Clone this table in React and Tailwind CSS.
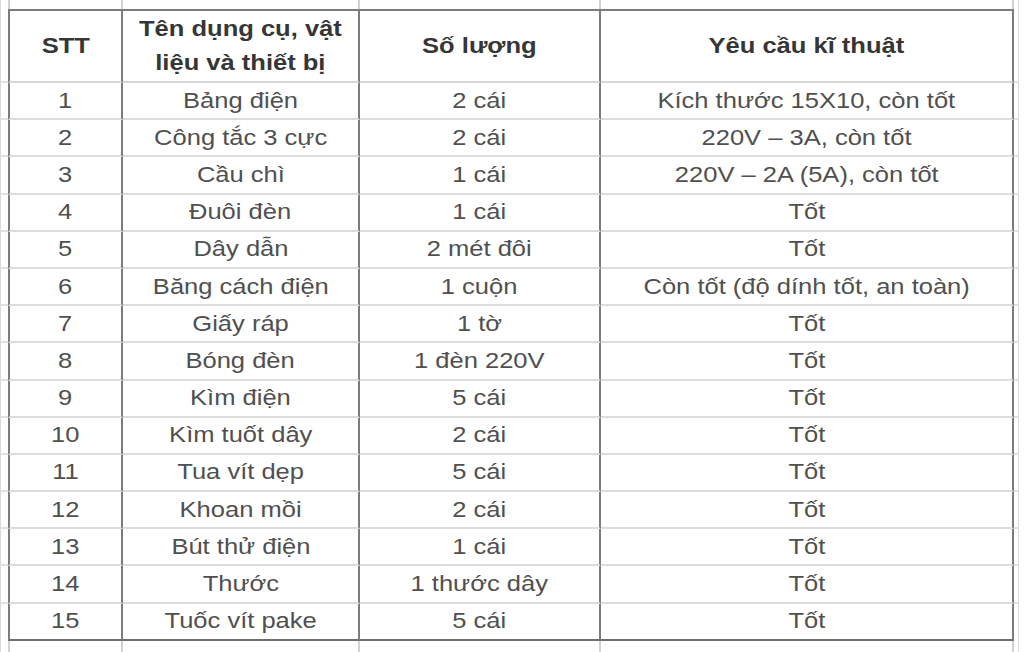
import React from "react";

const rows = [
  ["1", "Bảng điện", "2 cái", "Kích thước 15X10, còn tốt"],
  ["2", "Công tắc 3 cực", "2 cái", "220V – 3A, còn tốt"],
  ["3", "Cầu chì", "1 cái", "220V – 2A (5A), còn tốt"],
  ["4", "Đuôi đèn", "1 cái", "Tốt"],
  ["5", "Dây dẫn", "2 mét đôi", "Tốt"],
  ["6", "Băng cách điện", "1 cuộn", "Còn tốt (độ dính tốt, an toàn)"],
  ["7", "Giấy ráp", "1 tờ", "Tốt"],
  ["8", "Bóng đèn", "1 đèn 220V", "Tốt"],
  ["9", "Kìm điện", "5 cái", "Tốt"],
  ["10", "Kìm tuốt dây", "2 cái", "Tốt"],
  ["11", "Tua vít dẹp", "5 cái", "Tốt"],
  ["12", "Khoan mồi", "2 cái", "Tốt"],
  ["13", "Bút thử điện", "1 cái", "Tốt"],
  ["14", "Thước", "1 thước dây", "Tốt"],
  ["15", "Tuốc vít pake", "5 cái", "Tốt"],
];

function Txt({ children, bold }) {
  return (
    <span
      className={
        "inline-block scale-x-[1.16] whitespace-nowrap " +
        (bold ? "font-bold text-[#363636]" : "text-[#505050]")
      }
    >
      {children}
    </span>
  );
}

function Strip({ className }) {
  return (
    <div className={"flex " + className}>
      <div className="w-[8px] border-l border-[#dadada]" />
      <div className="w-[115px] border-x-2 border-[#d2d2d2]" />
      <div className="w-[237px] border-r-2 border-[#d2d2d2]" />
      <div className="w-[241px] border-r-2 border-[#d2d2d2]" />
      <div className="w-[413px] border-r-2 border-[#d2d2d2]" />
      <div className="w-[5px] border-r border-[#dadada]" />
    </div>
  );
}

function BodyRow({ r, last }) {
  const hb = last ? "border-b-2 border-b-[#6e6e6e]" : "border-b-2 border-b-[#dcdcdc]";
  const cell = "flex items-center justify-center " + hb;
  return (
    <div className="flex h-[37.2px]">
      <div className={"w-[8px] border-l border-l-[#dadada] " + (last ? "" : "border-b-2 border-b-[#e2e2e2]")} />
      <div className={"w-[115px] border-x-2 border-x-[#7c7c7c] " + cell}>
        <Txt>{r[0]}</Txt>
      </div>
      <div className={"w-[237px] border-r-2 border-r-[#7c7c7c] " + cell}>
        <Txt>{r[1]}</Txt>
      </div>
      <div className={"w-[241px] border-r-2 border-r-[#7c7c7c] " + cell}>
        <Txt>{r[2]}</Txt>
      </div>
      <div className={"w-[413px] border-r-2 border-r-[#7c7c7c] " + cell}>
        <Txt>{r[3]}</Txt>
      </div>
      <div className={"w-[5px] border-r border-r-[#dadada] " + (last ? "" : "border-b-2 border-b-[#e2e2e2]")} />
    </div>
  );
}

export default function App() {
  const head = "flex items-center justify-center text-center border-t-2 border-t-[#7c7c7c] border-b-2 border-b-[#d6d6d6]";
  return (
    <div
      className="w-[1024px] h-[652px] bg-white overflow-hidden flex flex-col text-[22px] leading-[34px]"
      style={{ fontFamily: '"Liberation Sans", Arial, sans-serif' }}
    >
      <Strip className="h-[9px]" />
      <div className="flex h-[74px]">
        <div className="w-[8px] border-l border-l-[#dadada] border-b-2 border-b-[#e2e2e2]" />
        <div className={"w-[115px] border-x-2 border-x-[#7c7c7c] " + head}>
          <Txt bold>STT</Txt>
        </div>
        <div className={"w-[237px] border-r-2 border-r-[#7c7c7c] flex-col " + head}>
          <Txt bold>Tên dụng cụ, vật</Txt>
          <Txt bold>liệu và thiết bị</Txt>
        </div>
        <div className={"w-[241px] border-r-2 border-r-[#7c7c7c] " + head}>
          <Txt bold>Số lượng</Txt>
        </div>
        <div className={"w-[413px] border-r-2 border-r-[#7c7c7c] " + head}>
          <Txt bold>Yêu cầu kĩ thuật</Txt>
        </div>
        <div className="w-[5px] border-r border-r-[#dadada] border-b-2 border-b-[#e2e2e2]" />
      </div>
      {rows.map((r, i) => (
        <BodyRow key={r[0]} r={r} last={i === rows.length - 1} />
      ))}
      <Strip className="flex-1" />
    </div>
  );
}
